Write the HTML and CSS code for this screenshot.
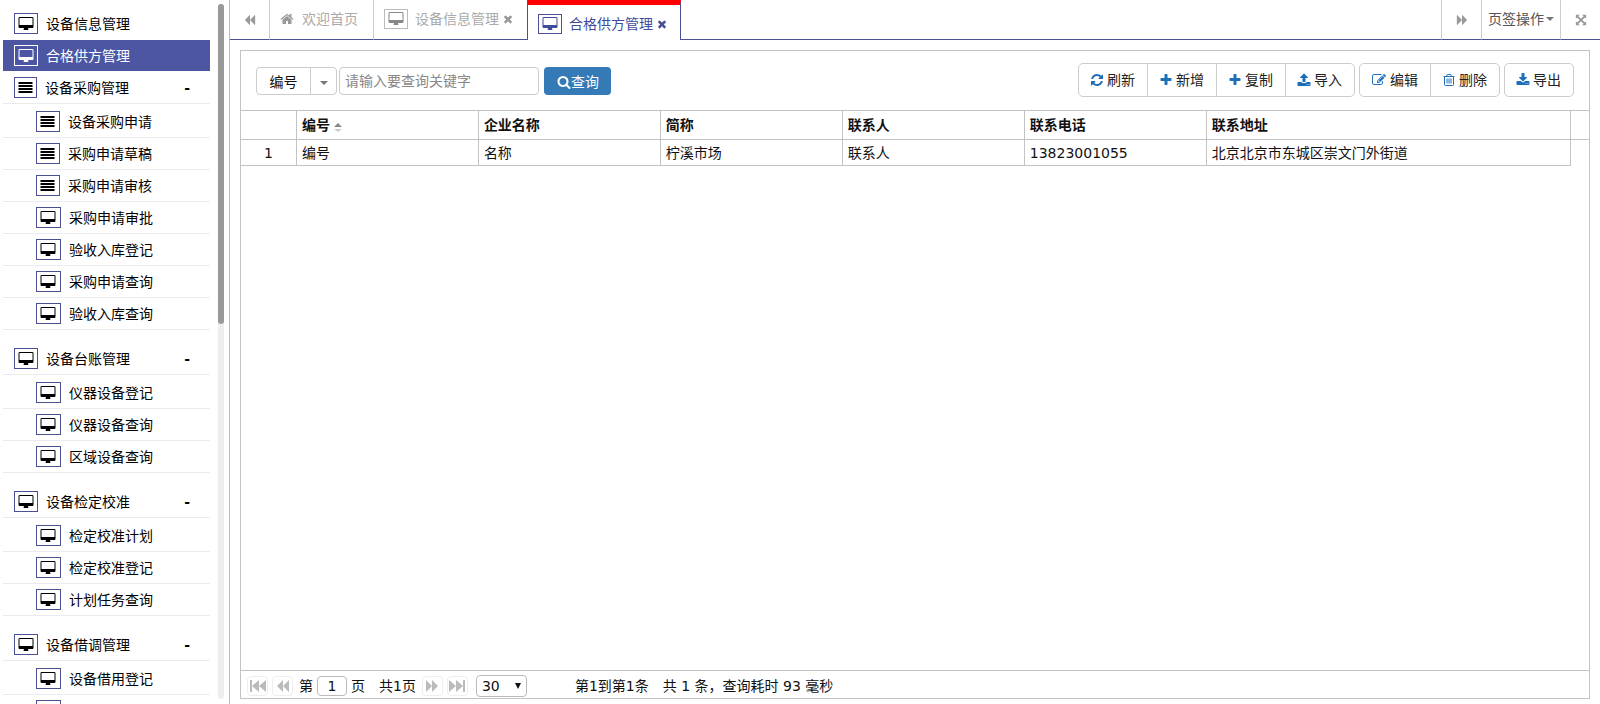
FILE: index.html
```
<!DOCTYPE html>
<html lang="zh-CN">
<head>
<meta charset="utf-8">
<title>合格供方管理</title>
<link rel="stylesheet" href="styles.css">
</head>
<body>
<svg class="sprite" aria-hidden="true">
  <symbol id="desktop" viewBox="0 0 1920 1792"><path d="M1792 992v-832q0-13-9.500-22.500t-22.500-9.500h-1600q-13 0-22.500 9.500t-9.500 22.500v832q0 13 9.500 22.500t22.500 9.500h1600q13 0 22.500-9.500t9.500-22.500zm128-832v1088q0 66-47 113t-113 47h-544q0 37 16 77.500t32 71 16 43.500q0 26-19 45t-45 19h-512q-26 0-45-19t-19-45q0-14 16-44t32-70 16-78h-544q-66 0-113-47t-47-113v-1088q0-66 47-113t113-47h1600q66 0 113 47t47 113z"/></symbol>
  <symbol id="list" viewBox="0 0 14 14"><path d="M0 1h14v2H0zM0 4h14v2H0zM0 7h14v2H0zM0 10h14v2H0z"/></symbol>
  <symbol id="times" viewBox="0 0 1792 1792"><path d="M1490 1322q0 40-28 68l-136 136q-28 28-68 28t-68-28l-294-294-294 294q-28 28-68 28t-68-28l-136-136q-28-28-28-68t28-68l294-294-294-294q-28-28-28-68t28-68l136-136q28-28 68-28t68 28l294 294 294-294q28-28 68-28t68 28l136 136q28 28 28 68t-28 68l-294 294 294 294q28 28 28 68z"/></symbol>
  <symbol id="plus" viewBox="0 0 1792 1792"><path d="M1600 736v192q0 40-28 68t-68 28h-416v416q0 40-28 68t-68 28h-192q-40 0-68-28t-28-68v-416h-416q-40 0-68-28t-28-68v-192q0-40 28-68t68-28h416v-416q0-40 28-68t68-28h192q40 0 68 28t28 68v416h416q40 0 68 28t28 68z"/></symbol>
  <symbol id="home" viewBox="0 0 1792 1792"><path d="M1472 992v480q0 26-19 45t-45 19h-384v-384h-256v384h-384q-26 0-45-19t-19-45v-480q0-1 .5-3t.5-3l575-474 575 474q1 2 1 6zm223-69l-62 74q-8 9-21 11h-3q-13 0-21-7l-692-577-692 577q-12 8-24 7-13-2-21-11l-62-74q-8-10-7-23.500t11-21.500l719-599q32-26 76-26t76 26l244 204v-195q0-14 9-23t23-9h192q14 0 23 9t9 23v408l219 182q10 8 11 21.500t-7 23.500z"/></symbol>
  <symbol id="refresh" viewBox="0 0 1792 1792"><path d="M1639 1056q0 5-1 7-64 268-268 434.500t-478 166.500q-146 0-282.500-55t-243.500-157l-129 129q-19 19-45 19t-45-19-19-45v-448q0-26 19-45t45-19h448q26 0 45 19t19 45-19 45l-137 137q71 66 161 102t187 36q134 0 250-65t186-179q11-17 53-117 8-23 30-23h192q13 0 22.500 9.500t9.500 22.500zm25-800v448q0 26-19 45t-45 19h-448q-26 0-45-19t-19-45 19-45l138-138q-148-137-349-137-134 0-250 65t-186 179q-11 17-53 117-8 23-30 23h-199q-13 0-22.500-9.500t-9.500-22.500v-7q65-268 270-434.500t480-166.500q146 0 284 55.500t245 156.500l130-129q19-19 45-19t45 19 19 45z"/></symbol>
  <symbol id="upload" viewBox="0 0 1792 1792"><path d="M1344 1472q0-26-19-45t-45-19-45 19-19 45 19 45 45 19 45-19 19-45zm256 0q0-26-19-45t-45-19-45 19-19 45 19 45 45 19 45-19 19-45zm128-224v320q0 40-28 68t-68 28h-1472q-40 0-68-28t-28-68v-320q0-40 28-68t68-28h427q21 56 70.500 92t110.500 36h256q61 0 110.500-36t70.500-92h427q40 0 68 28t28 68zm-325-648q-17 40-59 40h-256v448q0 26-19 45t-45 19h-256q-26 0-45-19t-19-45v-448h-256q-42 0-59-40-17-39 14-69l448-448q18-19 45-19t45 19l448 448q31 30 14 69z"/></symbol>
  <symbol id="download" viewBox="0 0 1792 1792"><path d="M1344 1344q0-26-19-45t-45-19-45 19-19 45 19 45 45 19 45-19 19-45zm256 0q0-26-19-45t-45-19-45 19-19 45 19 45 45 19 45-19 19-45zm128-224v320q0 40-28 68t-68 28h-1472q-40 0-68-28t-28-68v-320q0-40 28-68t68-28h465l135 136q58 56 136 56t136-56l136-136h464q40 0 68 28t28 68zm-325-569q17 41-14 70l-448 448q-18 19-45 19t-45-19l-448-448q-31-29-14-70 17-39 59-39h256v-448q0-26 19-45t45-19h256q26 0 45 19t19 45v448h256q42 0 59 39z"/></symbol>
  <symbol id="edit" viewBox="0 0 1792 1792"><path d="M888 1184l116-116-152-152-116 116v56h96v96h56zm440-720q-16-16-33 1l-350 350q-17 17-1 33t33-1l350-350q17-17 1-33zm80 594v190q0 119-84.500 203.500t-203.500 84.500h-832q-119 0-203.500-84.500t-84.500-203.500v-832q0-119 84.500-203.500t203.500-84.500h832q63 0 117 25 15 7 18 23 3 17-9 29l-49 49q-14 14-32 8-23-6-45-6h-832q-66 0-113 47t-47 113v832q0 66 47 113t113 47h832q66 0 113-47t47-113v-126q0-13 9-22l64-64q15-15 35-7t20 29zm-96-738l288 288-672 672h-288v-288zm444 132l-92 92-288-288 92-92q28-28 68-28t68 28l152 152q28 28 28 68t-28 68z"/></symbol>
  <symbol id="search" viewBox="0 0 1792 1792"><path d="M1216 832q0-185-131.500-316.500t-316.500-131.500-316.500 131.500-131.500 316.500 131.500 316.500 316.500 131.500 316.500-131.500 131.500-316.500zm512 832q0 52-38 90t-90 38q-54 0-90-38l-343-342q-179 124-399 124-143 0-273.500-55.500t-225-150-150-225-55.500-273.500 55.500-273.500 150-225 225-150 273.500-55.500 273.500 55.500 225 150 150 225 55.500 273.500q0 220-124 399l343 343q37 37 37 90z"/></symbol>
  <symbol id="trash" viewBox="0 0 14 14"><path d="M1.500 3.500h11M4.500 3.200l.8-1.700h3.400l.8 1.700M2.500 3.500v8q0 1 1 1h7q1 0 1-1v-8M5 5.500v5M7 5.500v5M9 5.500v5" fill="none" stroke="currentColor"/></symbol>
  <symbol id="expand" viewBox="0 0 14 14"><path d="M1 1h4.500L4 2.500 7 5.500 10 2.500 8.500 1H13v4.500L11.500 4l-3 3 3 3L13 8.500V13H8.500L10 11.500l-3-3-3 3L5.500 13H1V8.500L2.500 10l3-3-3-3L1 5.500z"/></symbol>
  <symbol id="forward" viewBox="0 0 14 14"><path d="M1 1l6 6V1l6 6-6 6V7l-6 6z"/></symbol>
  <symbol id="backward" viewBox="0 0 14 14"><path d="M13 1L7 7V1L1 7l6 6V7l6 6z"/></symbol>
  <symbol id="last" viewBox="0 0 16 14"><path d="M0 1l7 6V1l7 6-7 6V7l-7 6zM14 1h2v12h-2z"/></symbol>
  <symbol id="first" viewBox="0 0 16 14"><path d="M16 1L9 7V1L2 7l7 6V7l7 6zM0 1h2v12H0z"/></symbol>
</svg>
<div class="app">
  <aside class="sidebar">
    <nav class="menu">
      <a class="item" href="#"><span class="badge"><svg class="wide"><use href="#desktop"/></svg></span>设备信息管理</a>
      <a class="item active" href="#"><span class="badge"><svg class="wide"><use href="#desktop"/></svg></span>合格供方管理</a>
      <a class="item head" href="#"><span class="badge"><svg><use href="#list"/></svg></span>设备采购管理<b class="fold">-</b></a>
      <div class="sub">
        <a class="item" href="#"><span class="badge"><svg><use href="#list"/></svg></span>设备采购申请</a>
        <a class="item" href="#"><span class="badge"><svg><use href="#list"/></svg></span>采购申请草稿</a>
        <a class="item" href="#"><span class="badge"><svg><use href="#list"/></svg></span>采购申请审核</a>
        <a class="item" href="#"><span class="badge"><svg class="wide"><use href="#desktop"/></svg></span>采购申请审批</a>
        <a class="item" href="#"><span class="badge"><svg class="wide"><use href="#desktop"/></svg></span>验收入库登记</a>
        <a class="item" href="#"><span class="badge"><svg class="wide"><use href="#desktop"/></svg></span>采购申请查询</a>
        <a class="item" href="#"><span class="badge"><svg class="wide"><use href="#desktop"/></svg></span>验收入库查询</a>
      </div>
      <a class="item head" href="#"><span class="badge"><svg class="wide"><use href="#desktop"/></svg></span>设备台账管理<b class="fold">-</b></a>
      <div class="sub">
        <a class="item" href="#"><span class="badge"><svg class="wide"><use href="#desktop"/></svg></span>仪器设备登记</a>
        <a class="item" href="#"><span class="badge"><svg class="wide"><use href="#desktop"/></svg></span>仪器设备查询</a>
        <a class="item" href="#"><span class="badge"><svg class="wide"><use href="#desktop"/></svg></span>区域设备查询</a>
      </div>
      <a class="item head" href="#"><span class="badge"><svg class="wide"><use href="#desktop"/></svg></span>设备检定校准<b class="fold">-</b></a>
      <div class="sub">
        <a class="item" href="#"><span class="badge"><svg class="wide"><use href="#desktop"/></svg></span>检定校准计划</a>
        <a class="item" href="#"><span class="badge"><svg class="wide"><use href="#desktop"/></svg></span>检定校准登记</a>
        <a class="item" href="#"><span class="badge"><svg class="wide"><use href="#desktop"/></svg></span>计划任务查询</a>
      </div>
      <a class="item head" href="#"><span class="badge"><svg class="wide"><use href="#desktop"/></svg></span>设备借调管理<b class="fold">-</b></a>
      <div class="sub">
        <a class="item" href="#"><span class="badge"><svg class="wide"><use href="#desktop"/></svg></span>设备借用登记</a>
        <a class="item" href="#"><span class="badge"><svg class="wide"><use href="#desktop"/></svg></span></a>
      </div>
    </nav>
    <div class="track"><div class="thumb"></div></div>
  </aside>

  <main class="main">
    <header class="tabs">
      <button class="tab step" aria-label="向左"><svg><use href="#backward"/></svg></button>
      <a class="tab" href="#"><svg><use href="#home"/></svg><span>欢迎首页</span></a>
      <a class="tab page" href="#"><span class="badge"><svg class="wide"><use href="#desktop"/></svg></span><span>设备信息管理</span><svg class="close"><use href="#times"/></svg></a>
      <a class="tab page current" href="#"><span class="badge"><svg class="wide"><use href="#desktop"/></svg></span><span>合格供方管理</span><svg class="close"><use href="#times"/></svg></a>
      <span class="fill"></span>
      <button class="tab step right" aria-label="向右"><svg><use href="#forward"/></svg></button>
      <button class="tab right ops">页签操作<i class="caret"></i></button>
      <button class="tab step right" aria-label="全屏"><svg><use href="#expand"/></svg></button>
    </header>

    <section class="panel">
      <div class="toolbar">
        <form class="search">
          <div class="split"><button type="button">编号</button><button type="button" aria-label="选择字段"><i class="caret"></i></button></div>
          <input type="text" aria-label="关键字" placeholder="请输入要查询关键字">
          <button class="go" type="button"><svg><use href="#search"/></svg>查询</button>
        </form>
        <div class="actions">
          <div class="group">
            <button><svg><use href="#refresh"/></svg>刷新</button>
            <button><svg><use href="#plus"/></svg>新增</button>
            <button><svg><use href="#plus"/></svg>复制</button>
            <button><svg><use href="#upload"/></svg>导入</button>
          </div>
          <div class="group">
            <button><svg class="wide"><use href="#edit"/></svg>编辑</button>
            <button><svg><use href="#trash"/></svg>删除</button>
          </div>
          <div class="group">
            <button><svg><use href="#download"/></svg>导出</button>
          </div>
        </div>
      </div>

      <div class="grid">
        <table>
          <colgroup><col class="c-num"><col><col><col><col><col><col class="c-addr"><col class="c-end"></colgroup>
          <thead>
            <tr><th></th><th>编号<span class="sort"><i></i><i></i></span></th><th>企业名称</th><th>简称</th><th>联系人</th><th>联系电话</th><th>联系地址</th><th></th></tr>
          </thead>
          <tbody>
            <tr><td>1</td><td>编号</td><td>名称</td><td>柠溪市场</td><td>联系人</td><td>13823001055</td><td>北京北京市东城区崇文门外街道</td><td></td></tr>
          </tbody>
        </table>
      </div>

      <footer class="pager">
        <div class="nav">
          <button aria-label="首页"><svg><use href="#first"/></svg></button>
          <button aria-label="上一页"><svg><use href="#backward"/></svg></button>
        </div>
        <label class="goto">第<input type="text" value="1">页</label>
        <span class="total">共1页</span>
        <div class="nav">
          <button aria-label="下一页"><svg><use href="#forward"/></svg></button>
          <button aria-label="末页"><svg><use href="#last"/></svg></button>
        </div>
        <div class="size"><select aria-label="每页条数"><option>30</option></select></div>
        <span class="info"><span>第1到第1条</span><span>共 1 条，查询耗时 93 毫秒</span></span>
      </footer>
    </section>
  </main>
</div>
</body>
</html>
```
FILE: styles.css
```
* { box-sizing: border-box; }

body {
  margin: 0;
  background: #fff;
  color: #111;
  font: 14px/20px "DejaVu Sans", "Noto Sans CJK SC", sans-serif;
}

button, input, select { font: inherit; color: inherit; }
button { background: none; border: 0; padding: 0; cursor: pointer; }
a { color: inherit; text-decoration: none; }
svg { width: 14px; height: 14px; flex: none; fill: currentColor; }
svg.wide { width: 16px; }
.sprite { display: none; }

.app { display: flex; height: 100vh; overflow: hidden; }

/* Sidebar */
.sidebar {
  display: flex;
  flex: none;
  justify-content: space-between;
  width: 230px;
  padding: 4px 4px 5px 3px;
  border-right: 1px solid #bbb;
  overflow: hidden;
}
.menu { width: 207px; padding-top: 4px; color: #000; }
.item {
  display: flex;
  align-items: center;
  gap: 8px;
  height: 32px;
  padding: 0 20px 0 11px;
  border-bottom: 1px solid #fff;
}
.item.active { background: #4d56a3; background-clip: padding-box; color: #fff; }
.item.head, .sub .item { border-bottom-color: #e9ecee; }
.badge {
  display: flex;
  align-items: center;
  justify-content: center;
  height: 21px;
  padding: 0 3px;
  border: 1px solid #4b5092;
}
.item svg { width: 15px; }
.item svg.wide { width: 16px; }
.active .badge { border-color: #fff; }
.fold { margin-left: auto; }
.sub { padding-top: 2px; margin-bottom: 13px; }
.sub .item { padding-left: 33px; }
.sub .badge { padding: 0 4px 0 3px; }
.track { width: 6px; margin-right: 1px; border-radius: 3px; background: #eee; }
.thumb { height: 46%; border-radius: 3px; background: #999; }

/* Tabs */
.main { display: flex; flex: 1; flex-direction: column; min-width: 0; }
.tabs { display: flex; height: 40px; color: #999; }
.tab {
  display: flex;
  align-items: center;
  gap: 8px;
  padding: 0 15px 1px 10px;
  border-right: 1px solid #ccc;
  border-bottom: 1px solid #4b5092;
}
.tab span { color: #aaa; }
.tab.step { justify-content: center; width: 40px; padding: 0; }
.tab.step svg { width: 12px; height: 12px; }
.tab.page { gap: 7px; padding: 0 13px 1px 10px; }
.tab .badge { height: 20px; padding: 0 3px; border-color: #bbb; color: #888; }
.tab .close { width: 12px; margin-left: -4px; }
.tab.current {
  padding: 3px 12px 0 10px;
  border: 1px solid #4b5092;
  border-top: 5px solid #f00;
  border-bottom: 0;
  color: #4b5092;
  margin-left: -1px;
}
.tab.current span { color: #414b9b; }
.tab.current .badge { border-color: #4b5092; }
.fill { flex: 1; border-bottom: 1px solid #4b5092; }
.tab.right { border-right: 0; border-left: 1px solid #ccc; }
.tab.ops { gap: 2px; padding: 0 6px 1px; color: #555; }
.caret { border: 4px solid transparent; border-top-color: #777; border-bottom: 0; }

/* Panel */
.panel {
  display: flex;
  flex: 1;
  flex-direction: column;
  margin: 10px 10px 5px;
  border: 1px solid #c3c3c3;
}
.toolbar {
  display: flex;
  align-items: flex-end;
  justify-content: space-between;
  padding: 12px 15px 13px;
}
.search { display: flex; gap: 5px; height: 28px; margin-bottom: 2px; }
.split { display: flex; margin-right: -3px; border: 1px solid #ccc; border-radius: 4px; }
.split button { width: 53px; padding-top: 2px; }
.split button + button { display: flex; align-items: center; justify-content: center; width: 26px; padding-top: 4px; border-left: 1px solid #ccc; }
.search input { width: 200px; padding: 0 5px; border: 1px solid #ccc; border-radius: 4px; }
.search input::placeholder { color: #888; }
.go {
  display: flex;
  align-items: center;
  padding: 2px 12px 0 13px;
  border-radius: 4px;
  background: #337ab7;
  color: #fff;
}
.actions { display: flex; gap: 4px; }
.group { display: flex; border: 1px solid #ccc; border-radius: 5px; }
.group button { display: flex; align-items: center; gap: 3px; height: 32px; padding: 0 12px 0 11px; color: #222; }
.group button + button { border-left: 1px solid #ccc; }
.group svg { color: #1f6fb8; }

/* Data grid */
.grid { flex: 1; border-top: 1px solid #c3c3c3; }
table { width: 100%; table-layout: fixed; border-collapse: separate; border-spacing: 0; }
col { width: 13.500%; }
.c-num { width: 55px; }
.c-addr { width: 27%; }
.c-end { width: 18px; }
th, td { padding: 0 5px; border-right: 1px solid #c3c3c3; border-bottom: 1px solid #c3c3c3; text-align: left; white-space: nowrap; }
th { height: 29px; font-weight: 700; }
td { height: 26px; }
td:first-child { text-align: center; }
th:last-child { border-right: 0; }
td:last-child { border: 0; }
.sort { display: inline-flex; flex-direction: column; gap: 2px; margin-left: 4px; vertical-align: 3px; }
.sort i { border: 4px solid transparent; border-top: 0; border-bottom-color: #888; }
.sort i + i { border-top: 3px solid #ccc; border-bottom: 0; }

/* Pager */
.pager { display: flex; align-items: center; height: 28px; padding: 2px 6px 0; border-top: 1px solid #c3c3c3; }
.nav { display: flex; gap: 4px; }
.nav button { display: flex; align-items: center; justify-content: center; width: 21px; height: 20px; border: 1px solid #eee; border-radius: 4px; color: #bbb; }
.nav svg { width: 16px; }
.goto { display: flex; gap: 4px; margin: 0 14px 0 6px; }
.goto input { width: 30px; height: 20px; padding: 0; border: 1px solid #bbb; border-radius: 4px; text-align: center; }
.total { margin-right: 6px; }
.size { position: relative; margin-left: 8px; }
.size select { display: block; width: 51px; height: 22px; padding: 0 5px; border: 1px solid #bbb; border-radius: 4px; background: none; appearance: none; }
.size::after { position: absolute; top: 8px; right: 6px; border: 3px solid transparent; border-top: 6px solid #111; border-bottom: 0; content: ""; pointer-events: none; }
.info { display: flex; gap: 14px; margin-left: 48px; }
```
